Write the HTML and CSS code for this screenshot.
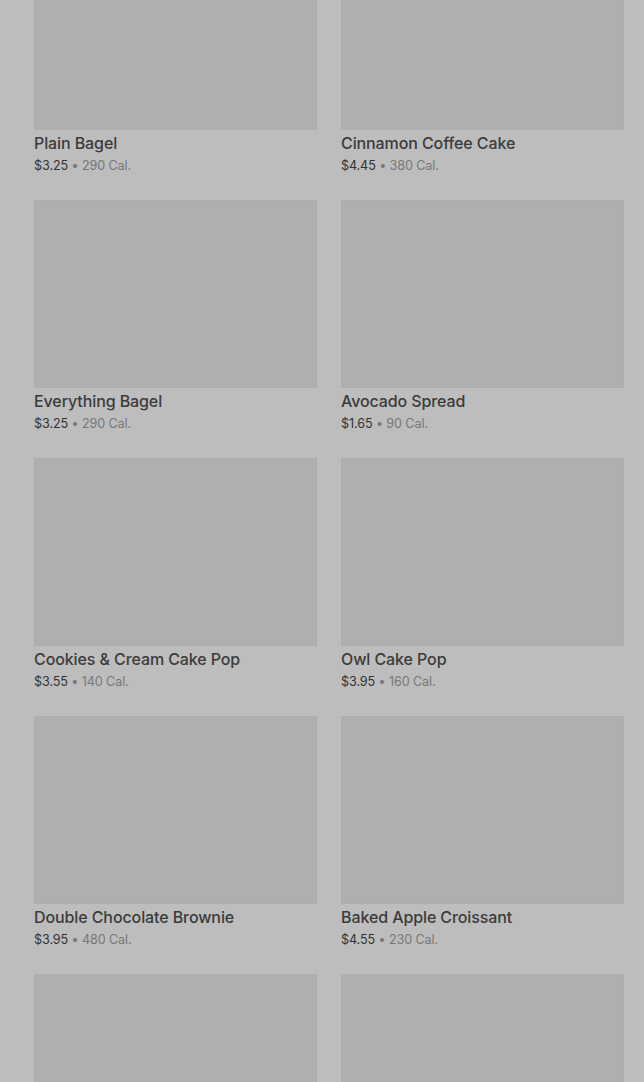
FILE: index.html
```html
<!DOCTYPE html>
<html>
<head>
<meta charset="utf-8">
<link rel="stylesheet" href="styles.css">
</head>
<body>
<div class="grid">
  <div class="item"><div class="thumb"></div><div class="name">Plain Bagel</div><div class="meta"><span class="price">$3.25</span> <span class="cal">• 290 Cal.</span></div></div>
  <div class="item"><div class="thumb"></div><div class="name">Cinnamon Coffee Cake</div><div class="meta"><span class="price">$4.45</span> <span class="cal">• 380 Cal.</span></div></div>
  <div class="item"><div class="thumb"></div><div class="name">Everything Bagel</div><div class="meta"><span class="price">$3.25</span> <span class="cal">• 290 Cal.</span></div></div>
  <div class="item"><div class="thumb"></div><div class="name">Avocado Spread</div><div class="meta"><span class="price">$1.65</span> <span class="cal">• 90 Cal.</span></div></div>
  <div class="item"><div class="thumb"></div><div class="name">Cookies &amp; Cream Cake Pop</div><div class="meta"><span class="price">$3.55</span> <span class="cal">• 140 Cal.</span></div></div>
  <div class="item"><div class="thumb"></div><div class="name">Owl Cake Pop</div><div class="meta"><span class="price">$3.95</span> <span class="cal">• 160 Cal.</span></div></div>
  <div class="item"><div class="thumb"></div><div class="name">Double Chocolate Brownie</div><div class="meta"><span class="price">$3.95</span> <span class="cal">• 480 Cal.</span></div></div>
  <div class="item"><div class="thumb"></div><div class="name">Baked Apple Croissant</div><div class="meta"><span class="price">$4.55</span> <span class="cal">• 230 Cal.</span></div></div>
  <div class="item"><div class="thumb"></div><div class="name">&nbsp;</div><div class="meta">&nbsp;</div></div>
  <div class="item"><div class="thumb"></div><div class="name">&nbsp;</div><div class="meta">&nbsp;</div></div>
</div>
</body>
</html>
```

FILE: styles.css
```css
html, body {
  margin: 0;
  padding: 0;
  background: #bdbdbd;
  overflow: hidden;
  height: 1082px;
}
body {
  font-family: Inter, Roboto, "Liberation Sans", sans-serif;
}
.grid {
  display: grid;
  grid-template-columns: 283px 283px;
  column-gap: 24px;
  row-gap: 24px;
  padding: 0 20px 0 34px;
  margin-top: -58px;
}
.item {
  display: flex;
  flex-direction: column;
}
.thumb {
  height: 188px;
  background: #afafaf;
  box-shadow: inset 0 0 0 1px #adadad;
}
.name {
  padding-top: 1px;
  padding-bottom: 1px;
  font-size: 16px;
  line-height: 24px;
  font-weight: 500;
  color: #3b3b3b;
  letter-spacing: -0.1px;
}
.meta {
  font-size: 12.6px;
  line-height: 20px;
  letter-spacing: -0.1px;
}
.price {
  color: #333333;
}
.cal {
  color: #777777;
}
```
